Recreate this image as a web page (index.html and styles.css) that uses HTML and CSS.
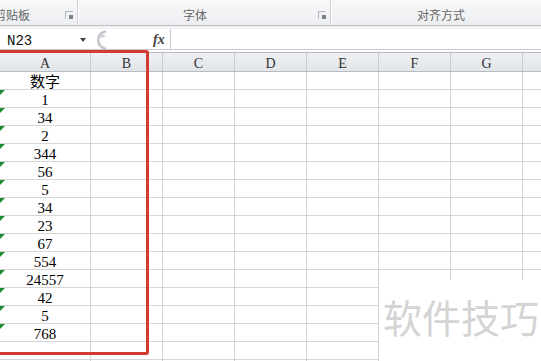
FILE: index.html
```html
<!DOCTYPE html>
<html>
  <head>
    <title>数字</title>
    <meta charset="utf-8" />
    <meta name="viewport" content="width=device-width, initial-scale=1.0" />
    <link rel="stylesheet" href="styles.css">
  </head>

  <body>
    <div class="ribbon">
      <div class="group group-clip">
        <span class="group-label">剪贴板</span>
        <span class="launcher"></span>
      </div>
      <div class="group group-font">
        <span class="group-label">字体</span>
        <span class="launcher"></span>
      </div>
      <div class="group group-align">
        <span class="group-label">对齐方式</span>
      </div>
    </div>

    <div class="formula-bar">
      <div class="name-box">
        <span>N23</span>
        <span class="arrow"></span>
      </div>
      <div class="splitter">
        <svg width="16" height="20" viewBox="0 0 16 20">
          <path d="M14 1.5 A 8 8.5 0 0 0 14 18.5" fill="none" stroke="#b9bcc0" stroke-width="2" />
          <path d="M14 3 A 6.5 7 0 0 0 14 17" fill="none" stroke="#e6e7e9" stroke-width="1.5" />
          <ellipse cx="10" cy="6" rx="3" ry="1.6" fill="#cfd1d4" />
        </svg>
      </div>
      <div class="fx">fx</div>
      <div class="formula-input"></div>
    </div>

    <div class="sheet">
      <div class="sheet-row col-headers" id="colHeaders"></div>
      <div id="rows"></div>
    </div>

    <div class="highlight"></div>
    <div class="watermark">软件技巧</div>

    <script>
      const columns = ["A", "B", "C", "D", "E", "F", "G", ""];
      const values = ["数字", "1", "34", "2", "344", "56", "5", "34", "23", "67", "554", "24557", "42", "5", "768"];
      const rowCount = 17;

      const header = document.getElementById("colHeaders");
      columns.forEach((name) => {
        const cell = document.createElement("div");
        cell.className = "col-header";
        cell.textContent = name;
        header.appendChild(cell);
      });

      const rows = document.getElementById("rows");
      for (let r = 0; r < rowCount; r++) {
        const row = document.createElement("div");
        row.className = "sheet-row";
        columns.forEach((name, c) => {
          const cell = document.createElement("div");
          cell.className = "cell";
          if (c === 0 && values[r] !== undefined) {
            cell.textContent = values[r];
            // numbers stored as text get the green marker
            if (r > 0) {
              cell.classList.add("text-number");
            }
          }
          row.appendChild(cell);
        });
        rows.appendChild(row);
      }
    </script>
  </body>
</html>
```

FILE: styles.css
```css
* {
  box-sizing: border-box;
}

body {
  margin: 0;
  width: 541px;
  height: 361px;
  overflow: hidden;
  position: relative;
  background-color: #fff;
  font-family: "Liberation Serif", "Noto Sans CJK SC", serif;
}

/* ribbon */

.ribbon {
  display: flex;
  height: 26px;
  background: linear-gradient(#f7f8f9, #eceef1);
  border-bottom: 1px solid #b9bdc3;
  overflow: hidden;
}

.group {
  display: flex;
  height: 100%;
  font-family: "Noto Sans CJK SC", sans-serif;
  font-size: 12px;
  color: #666;
}

.group + .group {
  border-left: 1px solid #cfd2d7;
  box-shadow: inset 1px 0 #fff;
}

.group-clip {
  width: 77px;
}

.group-font {
  width: 253px;
}

.group-align {
  flex: 1;
}

.group-label {
  padding-top: 9px;
  line-height: 12px;
  white-space: nowrap;
}

.group-clip .group-label {
  margin-left: -6px;
}

.group-font .group-label {
  margin-left: 105px;
}

.group-align .group-label {
  margin-left: 86px;
}

.launcher {
  width: 8px;
  height: 8px;
  margin-top: 11px;
  margin-left: auto;
  margin-right: 4px;
  border-top: 1px solid #b4b7bb;
  border-left: 1px solid #b4b7bb;
  position: relative;
}

.launcher::after {
  content: "";
  position: absolute;
  right: 0;
  bottom: 0;
  width: 4px;
  height: 4px;
  background-color: #7d8085;
}

/* formula bar */

.formula-bar {
  display: flex;
  align-items: stretch;
  height: 24px;
  border-top: 3px solid #f1f2f4;
  border-bottom: 1px solid #c6cacf;
  background-color: #fff;
}

.name-box {
  width: 90px;
  display: flex;
  align-items: center;
  padding-left: 7px;
  padding-top: 3px;
  font-family: "Liberation Mono", monospace;
  font-size: 14px;
  color: #111;
}

.arrow {
  margin-left: auto;
  margin-right: 4px;
  margin-bottom: 2px;
  border-top: 4px solid #444;
  border-left: 3px solid transparent;
  border-right: 3px solid transparent;
}

.splitter {
  width: 20px;
  padding-left: 2px;
  padding-top: 1px;
}

.fx {
  width: 17px;
  margin-left: 43px;
  padding-top: 3px;
  font-style: italic;
  font-weight: bold;
  font-size: 14px;
  color: #444;
}

.formula-input {
  flex: 1;
  border-left: 1px solid #c6cacf;
}

/* sheet */

.sheet {
  margin-top: 2px;
}

.sheet-row {
  display: grid;
  grid-template-columns: 91px repeat(7, 72px) 1fr;
}

.col-header {
  height: 20px;
  padding-top: 2px;
  line-height: 17px;
  text-align: center;
  font-size: 14px;
  color: #333;
  background: linear-gradient(#eef0f3, #e2e5e9);
  border-top: 1px solid #b7bcc2;
  border-bottom: 1px solid #b7bcc2;
  border-right: 1px solid #c8ccd2;
}

.cell {
  position: relative;
  height: 18px;
  padding-top: 3px;
  line-height: 14px;
  text-align: center;
  font-size: 15px;
  color: #000;
  border-right: 1px solid #d6d6d6;
  border-bottom: 1px solid #d6d6d6;
  white-space: nowrap;
}

.text-number::before {
  content: "";
  position: absolute;
  left: 0;
  top: 0;
  border-top: 5px solid #1e8a2e;
  border-right: 5px solid transparent;
}

/* overlays */

.highlight {
  position: absolute;
  left: -5px;
  top: 50px;
  width: 154px;
  height: 305px;
  border: 3px solid #d33a32;
  border-radius: 3px;
}

.watermark {
  position: absolute;
  left: 379px;
  top: 280px;
  right: 0;
  bottom: 0;
  padding-top: 17px;
  padding-left: 4px;
  background-color: #fff;
  font-family: "Noto Sans CJK SC", sans-serif;
  font-size: 39px;
  line-height: 1;
  color: #d4d4d4;
  white-space: nowrap;
}
```
